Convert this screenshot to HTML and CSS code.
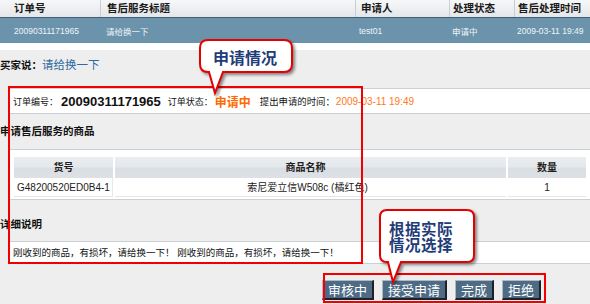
FILE: index.html
```html
<!DOCTYPE html>
<html lang="zh-CN">
<head>
<meta charset="utf-8">
<title>售后服务</title>
<link rel="stylesheet" href="styles.css">
</head>
<body>
<div class="page">
  <div class="list">
    <div class="list-head">
      <div class="cell c1">订单号</div>
      <div class="cell c2">售后服务标题</div>
      <div class="cell c3">申请人</div>
      <div class="cell c4">处理状态</div>
      <div class="cell c5">售后处理时间</div>
    </div>
    <div class="list-row">
      <div class="cell c1">20090311171965</div>
      <div class="cell c2">请给换一下</div>
      <div class="cell c3">test01</div>
      <div class="cell c4">申请中</div>
      <div class="cell c5">2009-03-11 19:49</div>
    </div>
  </div>

  <div class="content">
    <div class="buyer"><span class="buyer-label">买家说：</span><span class="buyer-msg">请给换一下</span></div>

    <div class="panel info">
      <span class="lbl">订单编号：</span><span class="order-no">20090311171965</span>
      <span class="lbl lbl-gap">订单状态：</span><span class="status">申请中</span>
      <span class="lbl lbl-gap2">提出申请的时间：</span><span class="time">2009-03-11 19:49</span>
    </div>

    <div class="title">申请售后服务的商品</div>
    <div class="panel goods">
      <div class="gtable">
        <div class="gh">货号</div>
        <div class="gh gh-name">商品名称</div>
        <div class="gh">数量</div>
        <div class="gd gd-sku">G48200520ED0B4-1</div>
        <div class="gd gd-name">索尼爱立信W508c (橘红色)</div>
        <div class="gd">1</div>
      </div>
    </div>

    <div class="title title-detail">详细说明</div>
    <div class="panel detail">刚收到的商品，有损坏，请给换一下！ 刚收到的商品，有损坏，请给换一下！</div>

    <div class="actions">
      <button class="btn">审核中</button>
      <button class="btn">接受申请</button>
      <button class="btn">完成</button>
      <button class="btn">拒绝</button>
    </div>
  </div>

  <div class="mark mark-main"></div>
  <div class="mark mark-actions"></div>

  <div class="bubble bubble-1">
    <svg class="bubble-shape" width="104" height="62" viewBox="0 0 104 62">
      <path d="M12,4 H88 Q96,4 96,12 V28 Q96,36 88,36 H27 L19,57 L13,36 H12 Q4,36 4,28 V12 Q4,4 12,4 Z" fill="#ffffff" stroke="#e60000" stroke-width="2"/>
    </svg>
    <span class="bubble-text bt-1">申请情况</span>
  </div>

  <div class="bubble bubble-2">
    <svg class="bubble-shape" width="104" height="80" viewBox="0 0 104 80">
      <path d="M11,4 H91 Q98,4 98,11 V49 Q98,56 91,56 H25 L17,76 L12,56 H11 Q4,56 4,49 V11 Q4,4 11,4 Z" fill="#ffffff" stroke="#e60000" stroke-width="2"/>
    </svg>
    <span class="bubble-text bt-2">根据实际<br>情况选择</span>
  </div>
</div>
</body>
</html>
```
FILE: styles.css
```css
* { box-sizing: border-box; }
html, body { margin: 0; padding: 0; }
body {
  background: #eeeeee;
  font-family: "Liberation Sans", "Noto Sans CJK SC", sans-serif;
  color: #111;
}
.page {
  position: relative;
  width: 590px;
  height: 304px;
  overflow: hidden;
  background: #eeeeee;
}

/* list */
.list { border-bottom: 7px solid #ffffff; }
.list-head, .list-row {
  display: grid;
  grid-template-columns: 100px 255px 94px 65px 76px;
  align-items: center;
}
.list-head {
  height: 18px;
  background: linear-gradient(#f6f7f8, #e4e7ea);
  border-bottom: 1px solid #3f5f78;
  font-size: 10.5px;
  font-weight: bold;
  color: #1a1a1a;
}
.list-head .cell {
  height: 17px;
  line-height: 17px;
  border-left: 1px solid #c9ced4;
  white-space: nowrap;
}
.list-head .c1 { border-left: none; }
.list-row {
  height: 25px;
  background: #6b94ac;
  color: #eef3f6;
  font-size: 8.5px;
}
.list-row .cell { white-space: nowrap; }
.c1 { padding-left: 14px; }
.c2 { padding-left: 6px; }
.list-row .c3 { padding-left: 4px; }
.c3 { padding-left: 5px; }
.c4 { padding-left: 3px; }
.c5 { padding-left: 3px; }

/* content */
.content { padding-left: 10px; }
.buyer {
  margin: 7px 0 0 -10px;
  height: 14px;
  line-height: 14px;
  white-space: nowrap;
}
.buyer-label { font-size: 10.5px; font-weight: bold; color: #111; }
.buyer-msg { font-size: 11.5px; color: #2f6aa3; }

.panel {
  background: #ffffff;
  border-top: 1px solid #cbd0d5;
  border-bottom: 1px solid #cbd0d5;
}
.info {
  margin-top: 17px;
  height: 26px;
  padding-left: 3px;
  display: flex;
  align-items: center;
  white-space: nowrap;
}
.lbl { font-size: 9px; color: #111; }
.lbl-gap { margin-left: 7px; }
.lbl-gap2 { margin-left: 9px; font-size: 9.4px; }
.order-no { font-size: 13px; font-weight: bold; margin-left: 3px; color: #111; }
.status { font-size: 12px; font-weight: bold; color: #ff6a00; margin-left: 2px; }
.time { font-size: 10px; color: #ff7a1a; margin-left: 1px; }

.title {
  margin: 11px 0 0 -10px;
  height: 13px;
  line-height: 13px;
  font-size: 10.5px;
  font-weight: bold;
  color: #111;
  white-space: nowrap;
}
.title-detail { margin-top: 18px; }

.goods {
  margin-top: 11px;
  padding: 7px 4px 2px 4px;
}
.gtable {
  display: grid;
  grid-template-columns: 99px 1fr 78px;
  column-gap: 2px;
}
.gh {
  height: 21px;
  line-height: 21px;
  text-align: center;
  font-size: 10px;
  font-weight: bold;
  color: #222;
  background: linear-gradient(#eaedf0 0%, #e6e9ec 45%, #dadfe4 55%, #dde1e5 100%);
}
.gh-name { padding-right: 10px; }
.gd {
  height: 19px;
  line-height: 19px;
  text-align: center;
  font-size: 10px;
  color: #222;
  white-space: nowrap;
  border-bottom: 1px solid #e4e6e8;
}
.gd-sku { text-align: left; padding-left: 3px; border-right: 1px solid #e6e8ea; }
.gd-name { padding-right: 6px; }

.detail {
  margin-top: 10px;
  height: 23px;
  line-height: 21px;
  padding-left: 3px;
  font-size: 9.5px;
  color: #111;
  white-space: nowrap;
}

.actions {
  margin-top: 16px;
  display: flex;
  justify-content: flex-end;
  gap: 8px;
  padding-right: 49px;
}
.btn {
  height: 20px;
  padding: 0 5px;
  margin: 0;
  background: #4d6b85;
  color: #ffffff;
  font-family: "Noto Sans CJK SC", sans-serif;
  font-size: 13px;
  line-height: 17px;
  border-style: solid;
  border-width: 1px 2px 2px 1px;
  border-color: #aeb9c4 #1c2228 #1c2228 #aeb9c4;
  border-radius: 0;
}

/* annotation overlays */
.mark {
  position: absolute;
  border: 2px solid #f00000;
}
.mark-main { left: 8px; top: 86px; width: 355px; height: 178px; }
.mark-actions { left: 323px; top: 273px; width: 223px; height: 30px; }

.bubble { position: absolute; }
.bubble-1 { left: 196px; top: 36px; width: 104px; height: 62px; }
.bubble-2 { left: 376px; top: 206px; width: 104px; height: 80px; }
.bubble-shape {
  position: absolute;
  left: 0;
  top: 0;
  filter: drop-shadow(2px 2px 1.5px rgba(0, 0, 0, 0.45));
}
.bubble-text {
  position: absolute;
  font-family: "Noto Sans CJK SC", sans-serif;
  font-weight: bold;
  color: #1f3d78;
  font-size: 16px;
  white-space: nowrap;
}
.bt-1 { left: 17px; top: 11px; line-height: 20px; }
.bt-2 { left: 13px; top: 14px; font-size: 15.5px; line-height: 16px; letter-spacing: 0.5px; }
```
